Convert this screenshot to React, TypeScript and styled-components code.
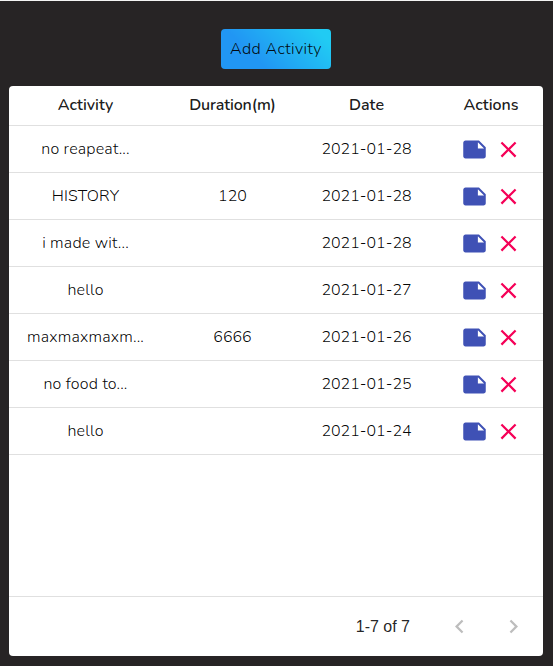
import React from "react";
import styled, { createGlobalStyle } from "styled-components";

const GlobalStyle = createGlobalStyle`
  * { box-sizing: border-box; }
  body { margin: 0; background: #272425; }
`;

const Page = styled.main`
  height: 666px;
  padding: 28px 10px 0 9px;
  border-top: 1px solid #f4f4f4;
  background: #272425;
  font-family: Nunito, "Open Sans", sans-serif;
  color: rgba(0, 0, 0, 0.87);
`;

const AddButton = styled.button`
  display: block;
  width: 110px;
  height: 40px;
  margin: 0 auto 17px;
  padding: 0;
  border: 0;
  border-radius: 4px;
  background: linear-gradient(45deg, #2196f3 30%, #21cbf3 90%);
  color: rgba(0, 0, 0, 0.95);
  font: 350 16px/40px Nunito, "Noto Sans", sans-serif;
  letter-spacing: 0.4px;
  white-space: nowrap;
`;

const Card = styled.section`
  display: flex;
  flex-direction: column;
  height: 570px;
  border-radius: 4px;
  background: #fff;
`;

const Row = styled.div<{ $header?: boolean }>`
  display: grid;
  grid-template-columns: 153px 141px 127px 113px;
  align-items: center;
  height: ${(p) => (p.$header ? 40 : 47)}px;
  border-bottom: 1px solid #e0e0e0;
`;

const Cell = styled.div<{ $spacing?: number }>`
  text-align: center;
  white-space: nowrap;
  color: rgba(0, 0, 0, 0.97);
  font-size: 16px;
  font-weight: 350;
  line-height: 22px;
  letter-spacing: ${(p) => p.$spacing ?? 0}px;
`;

const HeaderCell = styled(Cell)`
  padding-bottom: 1px;
  color: rgba(0, 0, 0, 0.9);
  font-weight: 600;
  &:last-child { padding-left: 9px; }
`;

const Actions = styled.div`
  display: flex;
  justify-content: center;
  gap: 7px;
  padding: 1px 0 0 10px;
`;

const Icon = styled.svg<{ $color: string }>`
  display: block;
  width: 27px;
  height: 27px;
  fill: ${(p) => p.$color};
`;

const Footer = styled.footer`
  display: flex;
  align-items: center;
  justify-content: flex-end;
  height: 60px;
  margin-top: auto;
  padding-right: 16px;
  border-top: 1px solid #e0e0e0;
`;

const Range = styled.span`
  margin-right: 36px;
  font: 400 16px/20px "Liberation Sans", Arial, sans-serif;
`;

const Pager = styled.div`
  display: flex;
  gap: 27px;
`;

const rows = [
  { name: "no reapeat...", duration: "", date: "2021-01-28" },
  { name: "HISTORY", duration: "120", date: "2021-01-28" },
  { name: "i made wit...", duration: "", date: "2021-01-28" },
  { name: "hello", duration: "", date: "2021-01-27" },
  { name: "maxmaxmaxm...", duration: "6666", date: "2021-01-26" },
  { name: "no food to...", duration: "", date: "2021-01-25" },
  { name: "hello", duration: "", date: "2021-01-24" },
];

export default function App() {
  return (
    <>
      <GlobalStyle />
      <Page>
        <AddButton>Add Activity</AddButton>
        <Card>
          <Row $header>
            <HeaderCell>Activity</HeaderCell>
            <HeaderCell $spacing={-0.15}>Duration(m)</HeaderCell>
            <HeaderCell>Date</HeaderCell>
            <HeaderCell>Actions</HeaderCell>
          </Row>
          {rows.map((r, i) => (
            <Row key={i}>
              <Cell $spacing={0.2}>{r.name}</Cell>
              <Cell>{r.duration}</Cell>
              <Cell>{r.date}</Cell>
              <Actions>
                <Icon $color="#3f51b5" viewBox="0 0 24 24">
                  <path d="M22 10l-6-6H4c-1.1 0-2 .9-2 2v12.01c0 1.1.9 1.99 2 1.99l16-.01c1.1 0 2-.89 2-2v-8zm-7-4.5l5.5 5.5H15V5.5z" />
                </Icon>
                <Icon $color="#f50057" viewBox="0 0 24 24">
                  <path d="M19 6.41L17.59 5 12 10.59 6.41 5 5 6.41 10.59 12 5 17.59 6.41 19 12 13.41 17.59 19 19 17.59 13.41 12z" />
                </Icon>
              </Actions>
            </Row>
          ))}
          <Footer>
            <Range>1-7 of 7</Range>
            <Pager>
              <Icon $color="#bdbdbd" viewBox="0 0 24 24">
                <path d="M15.41 16.59L10.83 12l4.58-4.59L14 6l-6 6 6 6 1.41-1.41z" />
              </Icon>
              <Icon $color="#bdbdbd" viewBox="0 0 24 24">
                <path d="M8.59 16.59L13.17 12 8.59 7.41 10 6l6 6-6 6-1.41-1.41z" />
              </Icon>
            </Pager>
          </Footer>
        </Card>
      </Page>
    </>
  );
}
